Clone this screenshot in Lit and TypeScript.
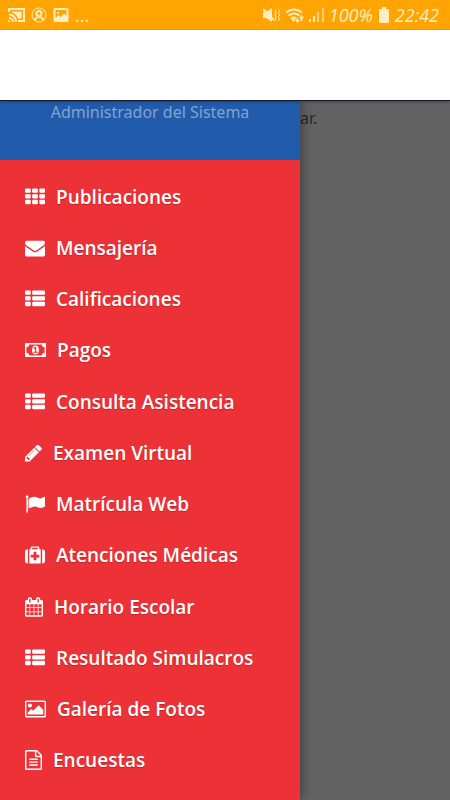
import { LitElement, html, css, svg, SVGTemplateResult } from "lit";
import { customElement, property } from "lit/decorators.js";

interface Icon {
  box: string;
  width: number;
  art: SVGTemplateResult;
}

const cells = (xs: number[][]) =>
  [128, 640, 1152].map((y) =>
    xs.map(([x, w]) => svg`<rect x=${x} y=${y} width=${w} height="384" rx="96"/>`)
  );

const icons: Record<string, Icon> = {
  grid: {
    box: "0 0 1792 1792",
    width: 20,
    art: svg`${cells([[0, 512], [640, 512], [1280, 512]])}`,
  },
  list: {
    box: "0 0 1792 1792",
    width: 20,
    art: svg`${cells([[0, 512], [640, 1152]])}`,
  },
  envelope: {
    box: "0 0 1792 1792",
    width: 20,
    art: svg`<path d="M1792 710v794q0 66-47 113t-113 47h-1472q-66 0-113-47t-47-113v-794q44 49 101 87 362 246 497 345 57 42 92.5 65.5t94.5 48 110 24.5h2q51 0 110-24.5t94.5-48 92.5-65.5q170-123 498-345 57-39 100-87zm0-294q0 79-49 151t-122 123q-376 261-468 325-10 7-42.5 31t-54 38.5-52 32.5-57.5 27-50 9h-2q-23 0-50-9t-57.5-27-52-32.5-54-38.5-42.5-31q-91-64-262-182.5t-205-142.5q-62-42-117-115.5t-55-136.5q0-78 41.5-130t118.5-52h1472q65 0 112.5 47t47.5 113z"/>`,
  },
  money: {
    box: "0 0 1920 1792",
    width: 21,
    art: svg`<path fill-rule="evenodd" d="M64 256H1856q64 0 64 64V1472q0 64-64 64H64q-64 0-64-64V320q0-64 64-64zM384 384q0 106-75 181t-181 75v512q106 0 181 75t75 181H1536q0-106 75-181t181-75V640q-106 0-181-75t-75-181zM960 480q150 0 235 125t85 291-85 291-235 125-235-125-85-291 85-291 235-125zM768 1152h384v-96h-128V608h-114L762 745l77 80 63-55q12-12 14-18h2v304H768z"/>`,
  },
  pencil: {
    box: "128 0 1536 1792",
    width: 17,
    art: svg`<path d="M491 1536l91-91-235-235-91 91v107h128v128h107zm523-928q0-22-22-22-10 0-17 7l-542 542q-7 7-7 17 0 22 22 22 10 0 17-7l542-542q7-7 7-17zm-54-192l416 416-832 832h-416v-416zm683 96q0 53-37 90l-166 166-416-416 166-165q36-38 90-38 53 0 91 38l235 234q37 39 37 91z"/>`,
  },
  flag: {
    box: "0 0 1792 1792",
    width: 20,
    art: svg`<path d="M320 256q0 72-64 110v1266q0 13-9.5 22.5t-22.5 9.5h-64q-13 0-22.5-9.5t-9.5-22.5v-1266q-64-38-64-110 0-53 37.5-90.5t90.5-37.5 90.5 37.5 37.5 90.5zm1472 64v763q0 25-12.5 38.5t-39.5 27.5q-215 116-369 116-61 0-123.5-22t-108.5-48-115.5-48-142.5-22q-192 0-464 146-17 9-33 9-26 0-45-19t-19-45v-742q0-32 31-55 21-14 79-43 236-120 421-120 107 0 200 29t219 88q38 19 88 19 54 0 117.5-21t110-47 88-47 54.5-21q26 0 45 19t19 45z"/>`,
  },
  medkit: {
    box: "0 0 1792 1792",
    width: 20,
    art: svg`<path d="M1280 1088v-192q0-14-9-23t-23-9h-224v-224q0-14-9-23t-23-9h-192q-14 0-23 9t-9 23v224h-224q-14 0-23 9t-9 23v192q0 14 9 23t23 9h224v224q0 14 9 23t23 9h192q14 0 23-9t9-23v-224h224q14 0 23-9t9-23zm-640-704h512v-128h-512v128zm-384 0v1280h-32q-92 0-158-66t-66-158v-832q0-92 66-158t158-66h32zm1152 0v1280h-1024v-1280h128v-160q0-40 28-68t68-28h576q40 0 68 28t28 68v160h128zm384 224v832q0 92-66 158t-158 66h-32v-1280h32q92 0 158 66t66 158z"/>`,
  },
  calendar: {
    box: "64 0 1664 1792",
    width: 18,
    art: svg`<path d="M192 1664h288v-288h-288v288zm352 0h320v-288h-320v288zm-352-352h288v-320h-288v320zm352 0h320v-320h-320v320zm-352-384h288v-288h-288v288zm736 736h320v-288h-320v288zm-384-736h320v-288h-320v288zm768 736h288v-288h-288v288zm-384-352h320v-320h-320v320zm-352-864v-288q0-13-9.5-22.5t-22.5-9.5h-64q-13 0-22.5 9.5t-9.5 22.5v288q0 13 9.5 22.5t22.5 9.5h64q13 0 22.5-9.5t9.5-22.5zm736 864h288v-320h-288v320zm-384-384h320v-288h-320v288zm384 0h288v-288h-288v288zm32-480v-288q0-13-9.5-22.5t-22.5-9.5h-64q-13 0-22.5 9.5t-9.5 22.5v288q0 13 9.5 22.5t22.5 9.5h64q13 0 22.5-9.5t9.5-22.5zm384-64v1280q0 52-38 90t-90 38h-1408q-52 0-90-38t-38-90v-1280q0-52 38-90t90-38h128v-96q0-66 47-113t113-47h64q66 0 113 47t47 113v96h384v-96q0-66 47-113t113-47h64q66 0 113 47t47 113v96h128q52 0 90 38t38 90z"/>`,
  },
  picture: {
    box: "0 0 1920 1792",
    width: 21,
    art: svg`<path fill-rule="evenodd" d="M160 128H1760q66 0 113 47t47 113V1504q0 66-47 113t-113 47H160q-66 0-113-47T0 1504V288q0-66 47-113t113-47zM160 256q-32 0-32 32V1504q0 32 32 32H1760q32 0 32-32V288q0-32-32-32z"/><circle cx="448" cy="576" r="192"/><path d="M1664 960v448H256v-192l320-320 160 160 512-512z"/>`,
  },
  file: {
    box: "128 0 1536 1792",
    width: 17,
    art: svg`<path d="M1596 380q28 28 48 76t20 88v1152q0 40-28 68t-68 28h-1344q-40 0-68-28t-28-68v-1600q0-40 28-68t68-28h896q40 0 88 20t76 48zm-444-244v376h376q-10-29-22-41l-313-313q-12-12-41-22zm384 1528v-1024h-416q-40 0-68-28t-28-68v-416h-768v1536h1280z"/><rect x="512" y="768" width="768" height="128" rx="32"/><rect x="512" y="1024" width="768" height="128" rx="32"/><rect x="512" y="1280" width="768" height="128" rx="32"/>`,
  },
};

const entries = [
  { icon: "grid", label: "Publicaciones" },
  { icon: "envelope", label: "Mensajería" },
  { icon: "list", label: "Calificaciones" },
  { icon: "money", label: "Pagos" },
  { icon: "list", label: "Consulta Asistencia" },
  { icon: "pencil", label: "Examen Virtual" },
  { icon: "flag", label: "Matrícula Web" },
  { icon: "medkit", label: "Atenciones Médicas" },
  { icon: "calendar", label: "Horario Escolar" },
  { icon: "list", label: "Resultado Simulacros" },
  { icon: "picture", label: "Galería de Fotos" },
  { icon: "file", label: "Encuestas" },
];

@customElement("status-bar")
class StatusBar extends LitElement {
  static styles = css`
    :host {
      display: flex;
      align-items: center;
      justify-content: space-between;
      height: 30px;
      padding: 0 11px 0 8px;
      background: #ffa400;
      color: #ffeec4;
      font: italic 18px/20px "Open Sans", sans-serif;
    }
    .group {
      display: flex;
      align-items: center;
    }
    .notices {
      gap: 6px;
    }
    .system {
      gap: 4px;
    }
    .dots {
      font-style: normal;
    }
    svg {
      display: block;
      fill: currentColor;
    }
    .line {
      fill: none;
      stroke: currentColor;
      stroke-width: 2;
    }
    .thin {
      fill: none;
      stroke: currentColor;
      stroke-width: 1;
    }
    .faint {
      opacity: 0.6;
    }
  `;

  render() {
    return html`
      <div class="group notices">
        <svg width="17" height="16" viewBox="0 0 17 16">
          <path class="line" d="M1 5V2H16V14H10M1 7.500a7 7 0 0 1 7 7M1 11a4 4 0 0 1 4 4" />
          <path d="M4 4.500H13.500V11.500H10A9 9 0 0 0 4 5.500zM0 13a2 2 0 0 1 2 2H0z" />
        </svg>
        <svg width="16" height="16" viewBox="0 0 16 16">
          <circle class="thin" cx="8" cy="8" r="7" />
          <circle class="line" cx="8" cy="6.500" r="2.500" />
          <path class="line" d="M3.500 13q1.500-3 4.500-3t4.500 3" />
        </svg>
        <svg width="16" height="16" viewBox="0 0 16 16">
          <path
            fill-rule="evenodd"
            d="M2 1H14q1.500 0 1.500 1.500V13.500q0 1.500-1.500 1.500H2Q.5 15 .5 13.500V2.500Q.5 1 2 1zM2.500 3V11l3-3 2 2 3.500-3.500 2.500 2.500V3zM4 5h2v2H4z"
          />
        </svg>
        <span class="dots">...</span>
      </div>
      <div class="group system">
        <svg width="18" height="16" viewBox="0 0 18 16">
          <path d="M0 5h3l6-4v14l-6-4H0z" />
          <path class="line" d="M0 2L11 13" />
          <path class="thin" d="M12 3l1 2-1 3 1 3-1 3M15 2l2 2-2 2 2 2-2 2 2 2-2 2" />
        </svg>
        <svg width="20" height="16" viewBox="0 0 20 16">
          <path class="line" d="M1 5.500q8-6 16 0M3.500 8.500q5.500-4 11 0" />
          <path class="line" d="M6 11.500q2.500-2 5 0" />
          <path d="M6.500 12h4l-2 3zM11.500 11h1.500v2h2l-2.500 3-2.500-3h1.500zM16.500 8l2.500 3h-1.500v3h-2v-3H14z" />
        </svg>
        <svg width="16" height="16" viewBox="0 0 16 16">
          <path d="M0 12h2v3H0zM4 9h2v6H4z" />
          <path class="faint" d="M8 5h2v10H8zM13 1h2v14h-2z" />
        </svg>
        <span>100%</span>
        <svg width="14" height="16" viewBox="0 0 14 16">
          <path d="M5 0h4v2h2q1 0 1 1v12q0 1-1 1H3q-1 0-1-1V3q0-1 1-1h2z" />
        </svg>
        <span>22:42</span>
      </div>
    `;
  }
}

@customElement("menu-icon")
class MenuIcon extends LitElement {
  @property() name = "list";

  static styles = css`
    :host {
      display: block;
      flex: none;
    }
    svg {
      display: block;
      fill: currentColor;
    }
  `;

  render() {
    const icon = icons[this.name];
    return html`<svg width=${icon.width} height="20" viewBox=${icon.box} aria-hidden="true">${icon.art}</svg>`;
  }
}

@customElement("app-root")
class AppRoot extends LitElement {
  static styles = css`
    :host {
      display: flex;
      flex-direction: column;
      min-height: 100vh;
      font-family: "Open Sans", sans-serif;
    }
    .toolbar {
      height: 71px;
      background: #fff;
      border-bottom: 1px solid #10182a;
      box-sizing: border-box;
      box-shadow: 0 1px 3px rgba(0, 0, 0, 0.3);
      z-index: 2;
    }
    .body {
      flex: 1;
      display: flex;
      background: #616261;
    }
    .drawer {
      flex: none;
      width: 300px;
      display: flex;
      flex-direction: column;
      background: #ed3237;
      box-shadow: 1px 0 10px rgba(0, 0, 0, 0.4);
      z-index: 1;
    }
    .profile {
      height: 59px;
      background: #205cab;
      color: #86a2cb;
      font-family: "Noto Sans", sans-serif;
      font-size: 16px;
      line-height: 22px;
      text-align: center;
    }
    .menu {
      flex: 1;
      display: flex;
      flex-direction: column;
      margin: 0;
      padding: 11px 0 14px;
      list-style: none;
    }
    .item {
      flex: 1;
      display: flex;
    }
    .link {
      flex: 1;
      display: flex;
      align-items: center;
      gap: 11px;
      min-height: 48px;
      padding: 0 25px;
      color: #fff;
      font-size: 19px;
      font-weight: 600;
      line-height: 26px;
      white-space: nowrap;
      text-decoration: none;
      text-shadow: 0 1px 1px rgba(90, 0, 0, 0.3);
    }
    .message {
      margin: 0;
      padding-top: 6px;
      color: #272827;
      font-family: "Noto Sans", sans-serif;
      font-size: 16px;
      line-height: 22px;
    }
  `;

  render() {
    return html`
      <status-bar></status-bar>
      <header class="toolbar"></header>
      <div class="body">
        <nav class="drawer">
          <div class="profile">Administrador del Sistema</div>
          <ul class="menu">
            ${entries.map(
              (entry) => html`
                <li class="item">
                  <a class="link" href="#"><menu-icon name=${entry.icon}></menu-icon>${entry.label}</a>
                </li>
              `
            )}
          </ul>
        </nav>
        <p class="message">ar.</p>
      </div>
    `;
  }
}
